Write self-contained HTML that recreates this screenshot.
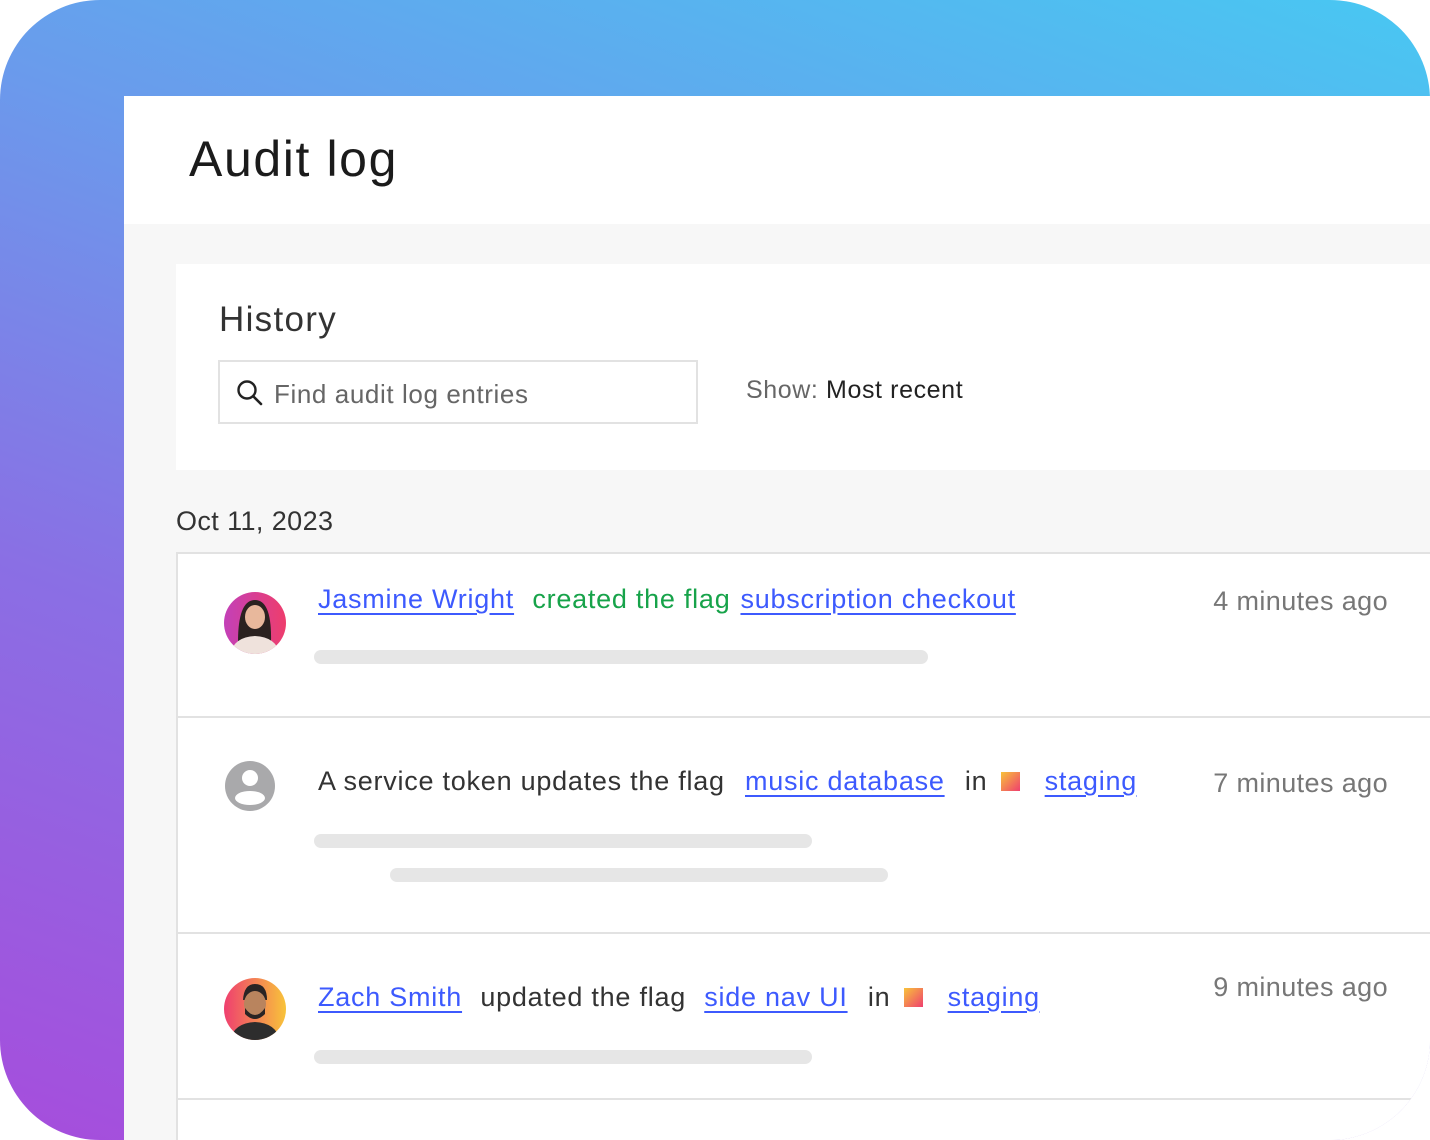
<!DOCTYPE html>
<html><head><style>
*{margin:0;padding:0;box-sizing:border-box}
body{width:1430px;height:1140px;background:#fff;font-family:"Liberation Sans",sans-serif;overflow:hidden;position:relative}
.frame{position:absolute;left:0;top:0;width:1430px;height:1140px;border-radius:100px;overflow:hidden;background:linear-gradient(200deg,#48c8f2 0%,#6a9bec 35%,#8a6fe4 65%,#a64ddc 100%)}
.panel{position:absolute;left:124px;top:96px;right:0;bottom:0;background:#f7f7f7}
.head{height:128px;background:#fff;position:relative}
.head h1{position:absolute;left:65px;top:34px;font-size:50px;font-weight:normal;color:#1b1b1b;letter-spacing:1.6px}
.card{position:absolute;left:52px;top:168px;right:0;height:206px;background:#fff}
.card h2{position:absolute;left:43px;top:36px;font-size:35px;font-weight:normal;color:#333;letter-spacing:1.3px}
.search{position:absolute;left:42px;top:96px;width:480px;height:64px;border:2px solid #e2e2e2;font-size:26px;color:#666;padding:17px 0 0 54px;letter-spacing:0.6px}
.show{position:absolute;left:570px;top:112px;font-size:25px;color:#666;letter-spacing:0.6px}
.show b{font-weight:normal;color:#222}
.date{position:absolute;left:52px;top:410px;font-size:27px;color:#333;letter-spacing:0.4px}
.list{position:absolute;left:52px;top:456px;right:0;bottom:0;background:#fff;border-left:2px solid #e2e2e2;border-top:2px solid #e2e2e2}
.row{position:absolute;left:0;right:0;border-bottom:2px solid #e2e2e2}
.t{position:absolute;left:140px;font-size:27px;color:#333;white-space:nowrap;letter-spacing:0.75px}
.t a{color:#3d5afe;text-decoration:underline;text-underline-offset:5px;text-decoration-thickness:2px}
.t .sp{margin-left:12px}
.time{position:absolute;right:42px;font-size:27px;color:#777;letter-spacing:0.4px}
.bar{position:absolute;height:14px;border-radius:7px;background:#e6e6e6}
.av{position:absolute;left:46px;width:62px;height:62px;border-radius:50%;overflow:hidden}
.sq{display:inline-block;width:19px;height:19px;background:linear-gradient(135deg,#f8c33a,#ef3f6f);vertical-align:-1px;margin:0 4px 0 14px}
</style></head><body>
<div class="frame">
<div class="panel">
<div class="head"><h1>Audit log</h1></div>
<div class="card"><h2>History</h2>
<div class="search"><svg style="position:absolute;left:16px;top:17px" width="28" height="28" viewBox="0 0 28 28"><circle cx="11" cy="11" r="8.5" fill="none" stroke="#222" stroke-width="2.4"/><path d="M17.5 17.5L25 25" stroke="#222" stroke-width="2.6" stroke-linecap="round"/></svg>Find audit log entries</div>
<div class="show">Show: <b>Most recent</b></div></div>
<div class="date">Oct 11, 2023</div>
<div class="list">
<div class="row" style="top:0;height:164px">
<svg class="av" style="top:38px" viewBox="0 0 62 62"><defs><linearGradient id="g1" x1="0" x2="1"><stop offset="0" stop-color="#c340b8"/><stop offset="1" stop-color="#ee3d6c"/></linearGradient></defs><rect width="62" height="62" fill="url(#g1)"/><path d="M14 50 Q14 8 31 8 Q48 8 47 50Z" fill="#2b2220"/><ellipse cx="31" cy="25" rx="10" ry="12" fill="#e8b89c"/><path d="M6 62 Q10 45 31 44 Q52 45 56 62Z" fill="#efe2dc"/></svg>
<div class="t" style="top:30px"><a>Jasmine Wright</a> <span style="color:#17a34a;margin:0 10px">created the flag</span><a>subscription checkout</a></div>
<div class="time" style="top:32px">4 minutes ago</div>
<div class="bar" style="left:136px;top:96px;width:614px"></div>
</div>
<div class="row" style="top:164px;height:216px">
<svg class="av" style="top:42px;left:46px;width:52px;height:52px" viewBox="0 0 52 52"><circle cx="26" cy="26" r="25" fill="#a9a9ab"/><circle cx="26" cy="18" r="8" fill="#fff"/><ellipse cx="26" cy="38" rx="15" ry="7" fill="#fff"/></svg>
<div class="t" style="top:48px">A service token updates the flag <a class="sp">music database</a> <span style="margin-left:12px">in</span><span class="sq"></span> <a class="sp">staging</a></div>
<div class="time" style="top:50px">7 minutes ago</div>
<div class="bar" style="left:136px;top:116px;width:498px"></div>
<div class="bar" style="left:212px;top:150px;width:498px"></div>
</div>
<div class="row" style="top:380px;height:166px">
<svg class="av" style="top:44px" viewBox="0 0 62 62"><defs><linearGradient id="g2" x1="0" x2="1"><stop offset="0" stop-color="#ef3f6f"/><stop offset="1" stop-color="#f8c33a"/></linearGradient></defs><rect width="62" height="62" fill="url(#g2)"/><path d="M19 22 Q20 6 31 6 Q43 6 43 22Z" fill="#2a2424"/><ellipse cx="31" cy="26" rx="11" ry="13" fill="#b9845e"/><path d="M21 30 Q31 44 41 30 L41 36 Q31 46 21 36Z" fill="#2a2424"/><path d="M6 62 Q10 45 31 44 Q52 45 56 62Z" fill="#2d2d2d"/></svg>
<div class="t" style="top:48px"><a>Zach Smith</a> <span style="margin:0 10px">updated the flag</span> <a>side nav UI</a> <span style="margin-left:12px">in</span><span class="sq"></span> <a class="sp">staging</a></div>
<div class="time" style="top:38px">9 minutes ago</div>
<div class="bar" style="left:136px;top:116px;width:498px"></div>
</div>
</div>
</div>
</div>
</body></html>
